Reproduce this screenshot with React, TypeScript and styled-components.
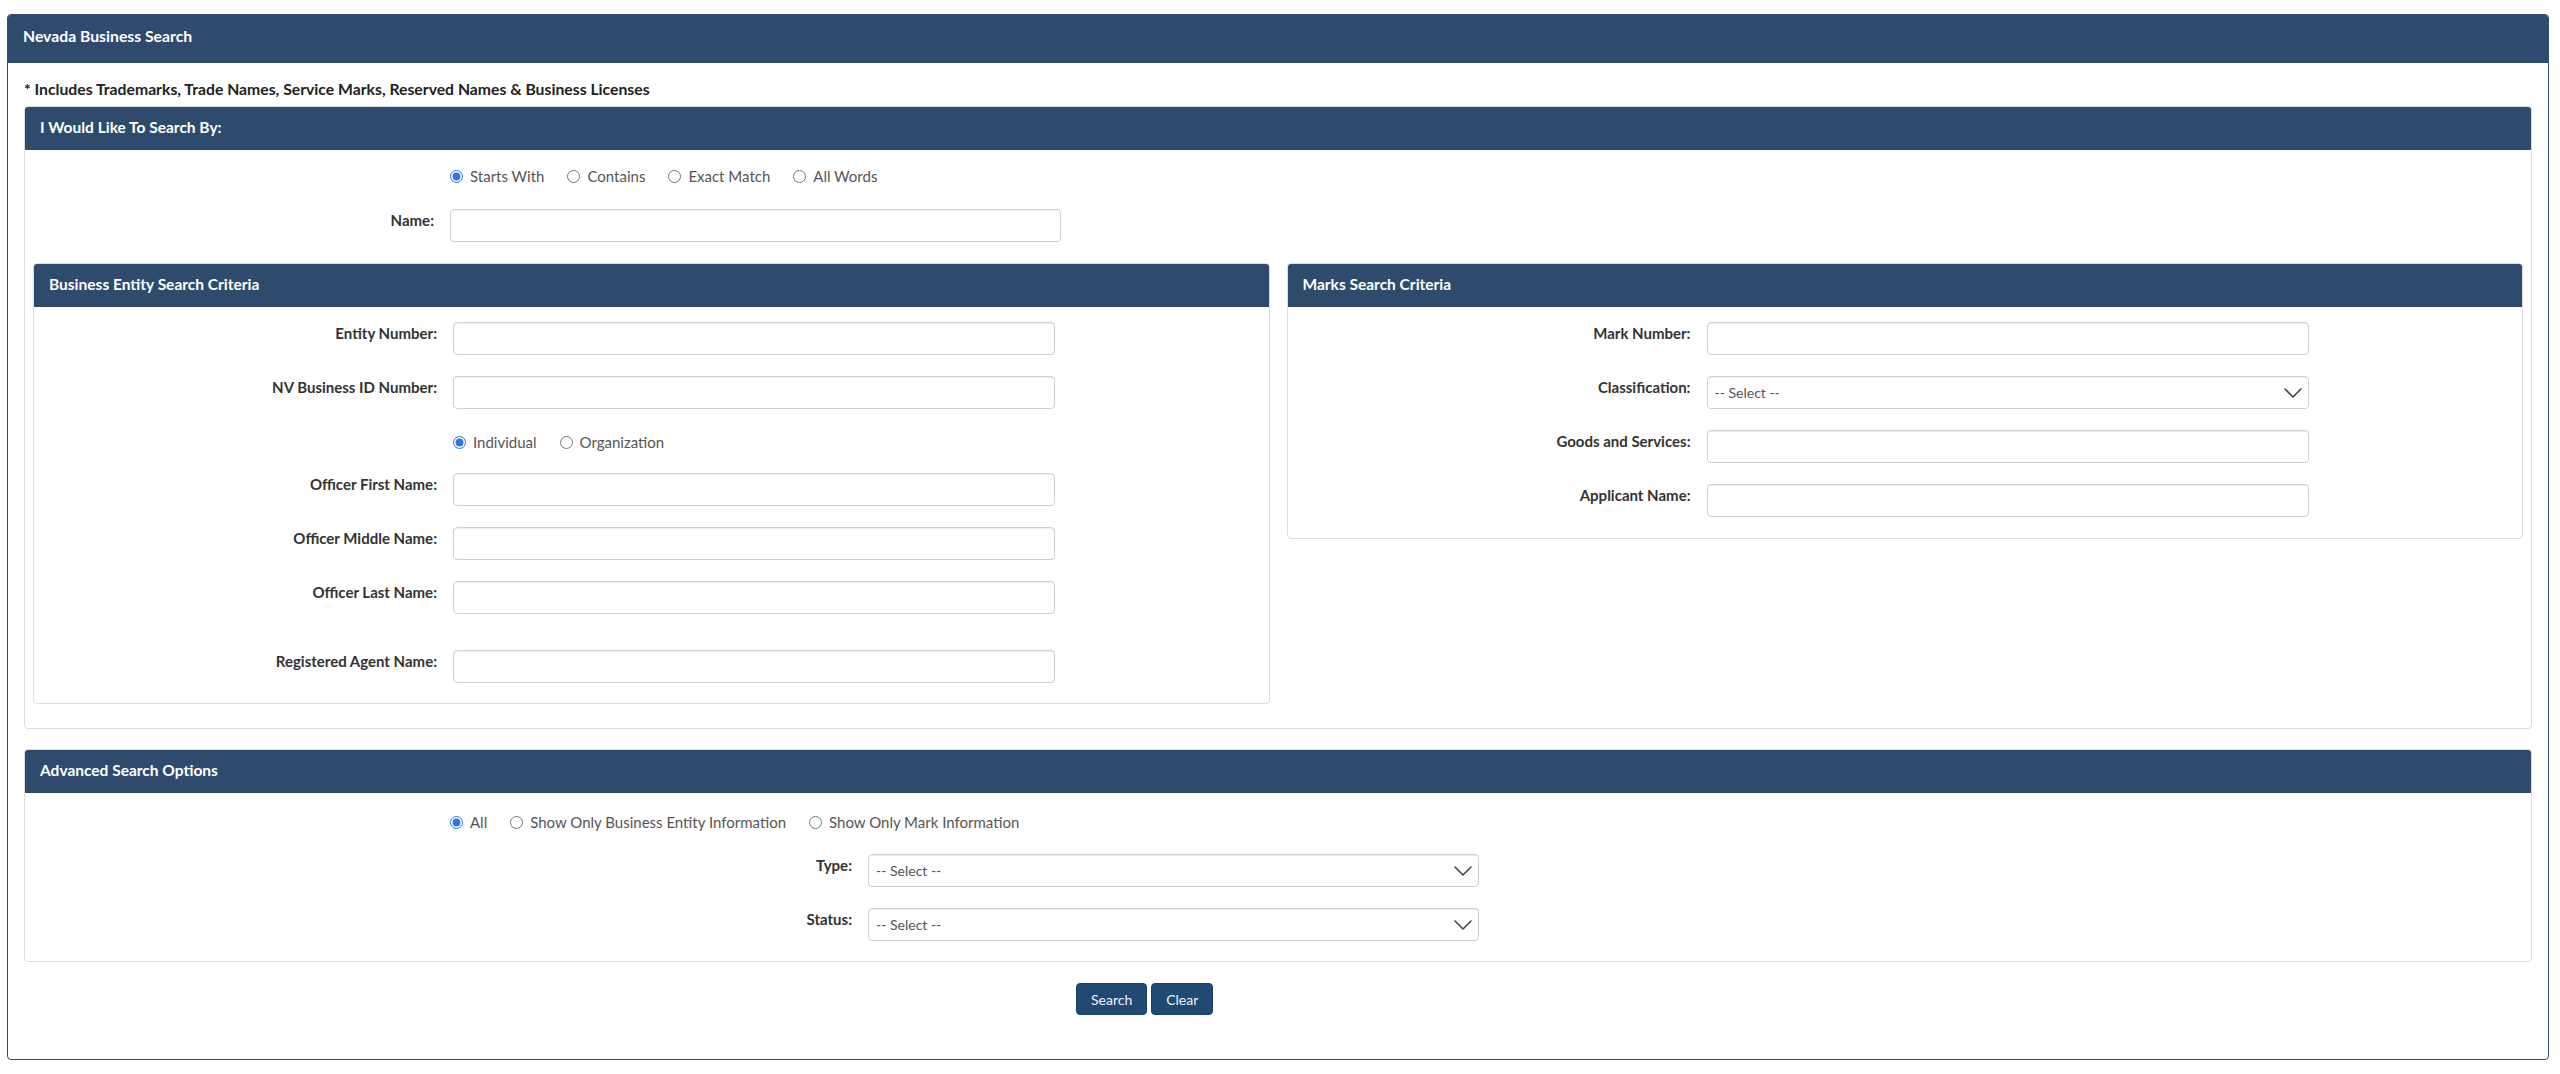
import styled, { createGlobalStyle } from 'styled-components'

const NAVY = '#2e4b6e'

const GlobalStyle = createGlobalStyle`
  body {
    margin: 0;
    background: #fff;
    font-family: Lato, 'Liberation Sans', sans-serif;
    font-size: 15px;
    line-height: 20px;
    color: #333;
  }
`

type RowField = {
  label: string
  kind?: 'text' | 'select'
}

const entityTop: RowField[] = [{ label: 'Entity Number:' }, { label: 'NV Business ID Number:' }]
const entityOfficers: RowField[] = [
  { label: 'Officer First Name:' },
  { label: 'Officer Middle Name:' },
  { label: 'Officer Last Name:' },
]
const marksFields: RowField[] = [
  { label: 'Mark Number:' },
  { label: 'Classification:', kind: 'select' },
  { label: 'Goods and Services:' },
  { label: 'Applicant Name:' },
]

const Chevron = () => (
  <ChevronIcon width="18" height="10" viewBox="0 0 18 10" fill="none">
    <path d="M1 1l8 8 8-8" stroke="#444" strokeWidth="1.6" strokeLinecap="round" strokeLinejoin="round" />
  </ChevronIcon>
)

const Field = ({ kind }: { kind?: 'text' | 'select' }) =>
  kind === 'select' ? (
    <SelectWrap>
      <Select defaultValue="">
        <option value="">-- Select --</option>
      </Select>
      <Chevron />
    </SelectWrap>
  ) : (
    <TextInput type="text" />
  )

const RadioOptions = ({ name, options }: { name: string; options: string[] }) => (
  <RadioGroup>
    {options.map((opt, i) => (
      <RadioLabel key={opt}>
        <Radio type="radio" name={name} defaultChecked={i === 0} />
        {opt}
      </RadioLabel>
    ))}
  </RadioGroup>
)

const App = () => {
  return (
    <Page>
      <GlobalStyle />
      <OuterPanel>
        <OuterHeader>Nevada Business Search</OuterHeader>
        <OuterBody>
          <Note>* Includes Trademarks, Trade Names, Service Marks, Reserved Names &amp; Business Licenses</Note>

          <Panel>
            <PanelHeader>I Would Like To Search By:</PanelHeader>
            <PanelBody $pad="14px 8px 24px">
              <FormRow $label={401} $field={611}>
                <span />
                <RadioOptions name="searchBy" options={['Starts With', 'Contains', 'Exact Match', 'All Words']} />
              </FormRow>
              <FormRow $label={401} $field={611}>
                <Label>Name:</Label>
                <TextInput type="text" />
              </FormRow>

              <Columns>
                <Panel $mb={0}>
                  <PanelHeader>Business Entity Search Criteria</PanelHeader>
                  <PanelBody $pad="15px 0 0">
                    {entityTop.map((f) => (
                      <FormRow key={f.label} $label={403} $field={602}>
                        <Label>{f.label}</Label>
                        <Field kind={f.kind} />
                      </FormRow>
                    ))}
                    <FormRow $label={403} $field={602} $mb={19}>
                      <span />
                      <RadioOptions name="officerType" options={['Individual', 'Organization']} />
                    </FormRow>
                    {entityOfficers.map((f) => (
                      <FormRow key={f.label} $label={403} $field={602}>
                        <Label>{f.label}</Label>
                        <Field kind={f.kind} />
                      </FormRow>
                    ))}
                    <FormRow $label={403} $field={602} $mt={36} $mb={20}>
                      <Label>Registered Agent Name:</Label>
                      <TextInput type="text" />
                    </FormRow>
                  </PanelBody>
                </Panel>

                <Panel $mb={0}>
                  <PanelHeader>Marks Search Criteria</PanelHeader>
                  <PanelBody $pad="15px 0 0">
                    {marksFields.map((f) => (
                      <FormRow key={f.label} $label={403} $field={602}>
                        <Label>{f.label}</Label>
                        <Field kind={f.kind} />
                      </FormRow>
                    ))}
                  </PanelBody>
                </Panel>
              </Columns>
            </PanelBody>
          </Panel>

          <Panel $mb={0}>
            <PanelHeader>Advanced Search Options</PanelHeader>
            <PanelBody $pad="17px 8px 0">
              <FormRow $label={401} $field={611} $mb={20}>
                <span />
                <RadioOptions
                  name="infoType"
                  options={['All', 'Show Only Business Entity Information', 'Show Only Mark Information']}
                />
              </FormRow>
              <FormRow $label={819} $field={611}>
                <Label>Type:</Label>
                <Field kind="select" />
              </FormRow>
              <FormRow $label={819} $field={611} $mb={20}>
                <Label>Status:</Label>
                <Field kind="select" />
              </FormRow>
            </PanelBody>
          </Panel>

          <ButtonRow>
            <Button type="button">Search</Button>
            <Button type="button">Clear</Button>
          </ButtonRow>
        </OuterBody>
      </OuterPanel>
    </Page>
  )
}

export default App

const Page = styled.div`
  padding: 14px 11px 0 7px;
`

const OuterPanel = styled.div`
  border: 1px solid ${NAVY};
  border-radius: 4px;
  background: #fff;
`

const OuterHeader = styled.div`
  height: 48px;
  box-sizing: border-box;
  padding: 11px 15px 0;
  background: ${NAVY};
  color: #fff;
  font-size: 15.75px;
  font-weight: 700;
  border-radius: 3px 3px 0 0;
`

const OuterBody = styled.div`
  padding: 16px 16px 44px;
`

const Note = styled.div`
  font-size: 15.75px;
  font-weight: 700;
  color: #222;
  margin-bottom: 7px;
`

const Panel = styled.div<{ $mb?: number }>`
  border: 1px solid #dcdcdc;
  border-radius: 4px;
  background: #fff;
  margin-bottom: ${({ $mb }) => ($mb ?? 20)}px;
`

const PanelHeader = styled.div`
  height: 43px;
  box-sizing: border-box;
  padding: 10px 15px 0;
  background: ${NAVY};
  color: #fff;
  font-size: 15.5px;
  font-weight: 700;
  border-radius: 3px 3px 0 0;
`

const PanelBody = styled.div<{ $pad: string }>`
  padding: ${({ $pad }) => $pad};
`

const Columns = styled.div`
  display: grid;
  grid-template-columns: 1fr 1fr;
  column-gap: 17px;
  align-items: start;
`

const FormRow = styled.div<{ $label: number; $field: number; $mb?: number; $mt?: number }>`
  display: grid;
  grid-template-columns: ${({ $label }) => $label}px ${({ $field }) => $field}px;
  column-gap: 16px;
  margin-top: ${({ $mt }) => $mt ?? 0}px;
  margin-bottom: ${({ $mb }) => $mb ?? 21}px;
`

const Label = styled.label`
  padding-top: 1px;
  text-align: right;
  font-weight: 700;
  color: #333;
  white-space: nowrap;
`

const TextInput = styled.input`
  box-sizing: border-box;
  width: 100%;
  height: 33px;
  margin: 0;
  padding: 0 8px;
  border: 1px solid #cfcfcf;
  border-radius: 4px;
  box-shadow: inset 0 1px 1px rgba(0, 0, 0, 0.075);
  font: inherit;
  background: #fff;
`

const SelectWrap = styled.div`
  position: relative;
  height: 33px;
`

const Select = styled.select`
  appearance: none;
  box-sizing: border-box;
  width: 100%;
  height: 33px;
  margin: 0;
  padding: 0 32px 0 7px;
  border: 1px solid #cfcfcf;
  border-radius: 4px;
  box-shadow: inset 0 1px 1px rgba(0, 0, 0, 0.075);
  background: #fff;
  font-family: Lato, 'Liberation Sans', sans-serif;
  font-size: 14px;
  color: #555;
`

const ChevronIcon = styled.svg`
  position: absolute;
  right: 7px;
  top: 12px;
  pointer-events: none;
`

const RadioGroup = styled.div`
  display: flex;
  align-items: center;
  height: 24px;
  white-space: nowrap;
`

const RadioLabel = styled.label`
  display: flex;
  align-items: center;
  margin-right: 23px;
  color: #555;
`

const Radio = styled.input`
  width: 13px;
  height: 13px;
  margin: 0 7px 0 0;
  accent-color: #2f74e6;
`

const ButtonRow = styled.div`
  display: flex;
  gap: 4px;
  margin-top: 21px;
  padding-left: 1052px;
`

const Button = styled.button`
  height: 32px;
  padding: 0 14px;
  border: 1px solid #1b3f66;
  border-radius: 4px;
  background: #204a74;
  color: #eef3f8;
  font-family: Lato, 'Liberation Sans', sans-serif;
  font-size: 14px;
`
